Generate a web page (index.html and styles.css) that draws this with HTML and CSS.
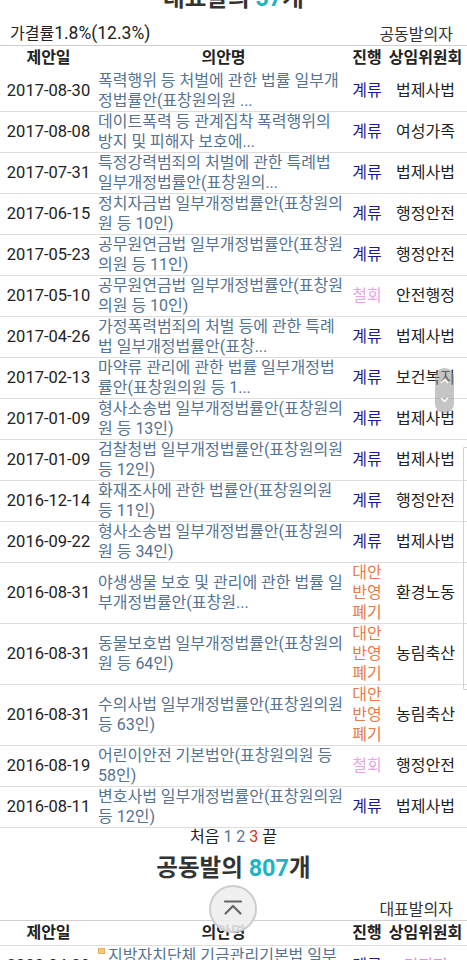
FILE: index.html
```html
<!DOCTYPE html>
<html lang="ko">
<head>
<meta charset="utf-8">
<title>표창원 의원 발의 법안</title>
<link rel="stylesheet" href="styles.css">
</head>
<body>
<section class="bills first">
  <h2 class="count-title">대표발의 <span class="num">57</span>개</h2>
  <div class="meta">
    <span class="meta-left">가결률<span class="rate-num">1.8%(12.3%)</span></span>
    <span class="meta-right">공동발의자</span>
  </div>
  <table class="bill-table">
    <colgroup><col class="c-date"><col class="c-title"><col class="c-state"><col class="c-comm"></colgroup>
    <thead><tr><th>제안일</th><th>의안명</th><th>진행</th><th>상임위원회</th></tr></thead>
    <tbody>
      <tr><td class="date">2017-08-30</td><td class="title">폭력행위 등 처벌에 관한 법률 일부개정법률안(표창원의원 ...</td><td class="st pending">계류</td><td>법제사법</td></tr>
      <tr><td class="date">2017-08-08</td><td class="title">데이트폭력 등 관계집착 폭력행위의 방지 및 피해자 보호에...</td><td class="st pending">계류</td><td>여성가족</td></tr>
      <tr><td class="date">2017-07-31</td><td class="title">특정강력범죄의 처벌에 관한 특례법 일부개정법률안(표창원의...</td><td class="st pending">계류</td><td>법제사법</td></tr>
      <tr><td class="date">2017-06-15</td><td class="title">정치자금법 일부개정법률안(표창원의원 등 10인)</td><td class="st pending">계류</td><td>행정안전</td></tr>
      <tr><td class="date">2017-05-23</td><td class="title">공무원연금법 일부개정법률안(표창원의원 등 11인)</td><td class="st pending">계류</td><td>행정안전</td></tr>
      <tr><td class="date">2017-05-10</td><td class="title">공무원연금법 일부개정법률안(표창원의원 등 10인)</td><td class="st withdrawn">철회</td><td>안전행정</td></tr>
      <tr><td class="date">2017-04-26</td><td class="title">가정폭력범죄의 처벌 등에 관한 특례법 일부개정법률안(표창...</td><td class="st pending">계류</td><td>법제사법</td></tr>
      <tr><td class="date">2017-02-13</td><td class="title">마약류 관리에 관한 법률 일부개정법률안(표창원의원 등 1...</td><td class="st pending">계류</td><td>보건복지</td></tr>
      <tr><td class="date">2017-01-09</td><td class="title">형사소송법 일부개정법률안(표창원의원 등 13인)</td><td class="st pending">계류</td><td>법제사법</td></tr>
      <tr><td class="date">2017-01-09</td><td class="title">검찰청법 일부개정법률안(표창원의원 등 12인)</td><td class="st pending">계류</td><td>법제사법</td></tr>
      <tr><td class="date">2016-12-14</td><td class="title">화재조사에 관한 법률안(표창원의원 등 11인)</td><td class="st pending">계류</td><td>행정안전</td></tr>
      <tr><td class="date">2016-09-22</td><td class="title">형사소송법 일부개정법률안(표창원의원 등 34인)</td><td class="st pending">계류</td><td>법제사법</td></tr>
      <tr><td class="date">2016-08-31</td><td class="title">야생생물 보호 및 관리에 관한 법률 일부개정법률안(표창원...</td><td class="st merged">대안반영폐기</td><td>환경노동</td></tr>
      <tr><td class="date">2016-08-31</td><td class="title">동물보호법 일부개정법률안(표창원의원 등 64인)</td><td class="st merged">대안반영폐기</td><td>농림축산</td></tr>
      <tr><td class="date">2016-08-31</td><td class="title">수의사법 일부개정법률안(표창원의원 등 63인)</td><td class="st merged">대안반영폐기</td><td>농림축산</td></tr>
      <tr><td class="date">2016-08-19</td><td class="title">어린이안전 기본법안(표창원의원 등 58인)</td><td class="st withdrawn">철회</td><td>행정안전</td></tr>
      <tr><td class="date">2016-08-11</td><td class="title">변호사법 일부개정법률안(표창원의원 등 12인)</td><td class="st pending">계류</td><td>법제사법</td></tr>
    </tbody>
  </table>
  <div class="pager">처음 <span class="pg-link">1</span> <span class="pg-link">2</span> <span class="pg-cur">3</span> 끝</div>
</section>

<section class="bills second">
  <h2 class="count-title">공동발의 <span class="num">807</span>개</h2>
  <div class="meta">
    <span class="meta-left"></span>
    <span class="meta-right">대표발의자</span>
  </div>
  <table class="bill-table with-head-line">
    <colgroup><col class="c-date"><col class="c-title"><col class="c-state"><col class="c-comm"></colgroup>
    <thead><tr><th>제안일</th><th>의안명</th><th>진행</th><th>상임위원회</th></tr></thead>
    <tbody>
      <tr><td class="date">2020-04-29</td><td class="title"><span class="new-icon"></span>지방자치단체 기금관리기본법 일부개정법률안(김영호의원 등 10인)</td><td class="st pending">계류</td><td class="unassigned">미지정</td></tr>
    </tbody>
  </table>
</section>

<div class="fast-scroll">
  <svg width="19" height="45" viewBox="0 0 19 45"><path d="M6 15l3.5-3.5L13 15M6 30l3.5 3.5L13 30" fill="none" stroke="#fff" stroke-width="1.4"/></svg>
</div>
<div class="scroll-thumb"></div>
<button class="to-top" aria-label="맨 위로">
  <svg width="26" height="26" viewBox="0 0 26 26"><path d="M5 5.5h16M5.5 17.5L13 10l7.5 7.5" fill="none" stroke="#666" stroke-width="2.2" stroke-linecap="round" stroke-linejoin="round"/></svg>
</button>
</body>
</html>
```
FILE: styles.css
```css
* { box-sizing: border-box; }
html, body { margin: 0; padding: 0; background: #fff; overflow: hidden; }
body {
  width: 467px;
  height: 960px;
  font-family: Roboto, "Noto Sans CJK KR", sans-serif;
  font-size: 16px;
  color: #222;
}

.count-title {
  margin: 0;
  text-align: center;
  font-size: 23.5px;
  font-weight: 700;
  line-height: 30px;
  color: #333;
}
.first .count-title { margin-top: -17px; }
.second .count-title { margin-top: 7px; }
.count-title .num { color: #1fb4c4; }

.meta {
  display: flex;
  justify-content: space-between;
  height: 22px;
  margin-top: 10px;
  padding: 0 14px 0 10px;
}
.meta-left { line-height: 20px; }
.meta-right { align-self: flex-end; line-height: 20px; color: #333; }
.rate-num { font-size: 17.5px; }
.second .meta { margin-top: 15px; }

.bill-table {
  width: 467px;
  border-collapse: collapse;
  table-layout: fixed;
  border-top: 1px solid #cfcfcf;
}
.c-date { width: 97px; }
.c-title { width: 253px; }
.c-state { width: 34px; }
.c-comm { width: 83px; }

.bill-table th {
  height: 25px;
  padding: 0;
  font-weight: 700;
  line-height: 20px;
  text-align: center;
  vertical-align: middle;
  color: #222;
}
.with-head-line thead tr { border-bottom: 1px solid #dedede; }
.bill-table tbody tr { border-bottom: 1px solid #dedede; }
.bill-table td {
  padding: 0;
  line-height: 20px;
  text-align: center;
  vertical-align: middle;
}
.bill-table td.date { font-size: 16.5px; color: #222; }
.bill-table td.title {
  text-align: left;
  padding: 0 4px 0 1px;
  color: #557392;
}
.st.pending { color: #1c1c92; }
.st.withdrawn { color: #e8a6e3; }
.st.merged { color: #ea7a48; }
.unassigned { color: #d893d6; }

.new-icon {
  display: inline-block;
  width: 7px;
  height: 6px;
  margin: 2px 3px 0 0;
  vertical-align: top;
  background: #f1c97a;
  border: 1px solid #e4b060;
}

.pager {
  text-align: center;
  font-size: 16px;
  line-height: 18px;
  color: #222;
}
.pg-link { color: #557392; }
.pg-cur { color: #d8302a; }

.fast-scroll {
  position: fixed;
  left: 435px;
  top: 368px;
  width: 19px;
  height: 45px;
  border-radius: 9px;
  background: rgba(150, 150, 150, 0.55);
}
.fast-scroll svg { display: block; }

.scroll-thumb {
  position: fixed;
  left: 463px;
  top: 447px;
  width: 4px;
  height: 243px;
  border: 1px solid #d2d2d2;
  border-right: none;
  border-radius: 2px 0 0 2px;
}

.to-top {
  position: fixed;
  left: 209px;
  top: 885px;
  width: 48px;
  height: 48px;
  padding: 0;
  border-radius: 50%;
  border: 2px solid #cdcdcd;
  background: rgba(238, 238, 238, 0.88);
  display: flex;
  align-items: center;
  justify-content: center;
}
.to-top svg { display: block; }
```
